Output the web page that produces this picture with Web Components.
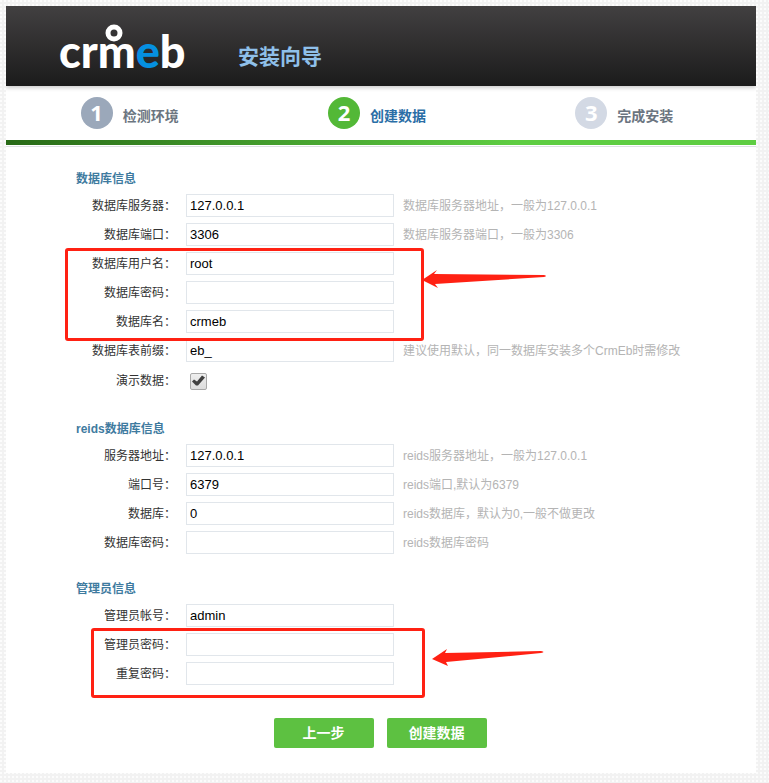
<!DOCTYPE html>
<html lang="zh-CN">
<head>
<meta charset="utf-8">
<title>安装向导</title>
<style>
    body{
        margin: 6px 13px 10px 6px;
        background: #f2f2f2 radial-gradient(circle at 1px 1px, #fcfcfc 1px, transparent 1px) 0 0 / 4px 4px;
        font: 12px/20px "Liberation Sans", "Noto Sans CJK SC", sans-serif;
        color: #333;
    }
</style>
</head>
<body>

<install-page>
    <install-header slot="header" heading="安装向导"></install-header>

    <step-bar slot="steps">
        <step-item number="1" state="done">检测环境</step-item>
        <step-item number="2" state="current">创建数据</step-item>
        <step-item number="3">完成安装</step-item>
    </step-bar>

    <form-section heading="数据库信息">
        <form-row label="数据库服务器：" value="127.0.0.1">数据库服务器地址，一般为127.0.0.1</form-row>
        <form-row label="数据库端口：" value="3306">数据库服务器端口，一般为3306</form-row>
        <marked-rows class="database">
            <form-row label="数据库用户名：" value="root"></form-row>
            <form-row label="数据库密码：" type="password"></form-row>
            <form-row label="数据库名：" value="crmeb"></form-row>
        </marked-rows>
        <form-row label="数据库表前缀：" value="eb_">建议使用默认，同一数据库安装多个CrmEb时需修改</form-row>
        <form-row label="演示数据：" type="checkbox"></form-row>
    </form-section>

    <form-section heading="reids数据库信息">
        <form-row label="服务器地址：" value="127.0.0.1">reids服务器地址，一般为127.0.0.1</form-row>
        <form-row label="端口号：" value="6379">reids端口,默认为6379</form-row>
        <form-row label="数据库：" value="0">reids数据库，默认为0,一般不做更改</form-row>
        <form-row label="数据库密码：" type="password">reids数据库密码</form-row>
    </form-section>

    <form-section heading="管理员信息">
        <form-row label="管理员帐号：" value="admin"></form-row>
        <marked-rows class="admin">
            <form-row label="管理员密码：" type="password"></form-row>
            <form-row label="重复密码：" type="password"></form-row>
        </marked-rows>
    </form-section>

    <form-button slot="actions">上一步</form-button>
    <form-button slot="actions">创建数据</form-button>
</install-page>

<script>
function attach(el, html){
    const root = el.attachShadow({ mode: 'open' });
    root.innerHTML = html;
    return root;
}

class InstallPage extends HTMLElement{
    constructor(){
        super();
        attach(this, `
            <style>
            :host{
                display: block;
                background: #fff;
                box-shadow: 0 0 12px rgba(0, 0, 0, 0.25);
            }

            main{
                padding: 21px 0 0 70px;
            }

            footer{
                display: flex;
                justify-content: center;
                gap: 13px;
                padding: 9px 2px 25px 0;
            }
            </style>

            <slot name="header"></slot>
            <slot name="steps"></slot>
            <main><slot></slot></main>
            <footer><slot name="actions"></slot></footer>
        `);
    }
}

class InstallHeader extends HTMLElement{
    constructor(){
        super();
        const root = attach(this, `
            <style>
            :host{
                position: relative;
                display: flex;
                height: 80px;
                padding-left: 52px;
                background: linear-gradient(#424041, #1b1b1b);
                box-shadow: 0 2px 4px rgba(0, 0, 0, 0.2);
            }

            svg{
                width: 140px;
                height: 80px;
                font: 900 45px Lato, sans-serif;
                fill: #fff;
            }

            .blue{
                fill: #0590e0;
            }

            h1{
                margin: 36px 0 0 40px;
                font-size: 21px;
                font-weight: bold;
                line-height: 30px;
                color: #8fc0ea;
            }
            </style>

            <svg viewBox="0 0 140 80" role="img" aria-label="crmeb">
                <text x="1" y="62">crm<tspan class="blue">e</tspan>b</text>
                <circle cx="56" cy="27" r="6" fill="none" stroke="#fff" stroke-width="5"/>
            </svg>
            <h1></h1>
        `);
        root.querySelector('h1').textContent = this.getAttribute('heading');
    }
}

class StepBar extends HTMLElement{
    constructor(){
        super();
        attach(this, `
            <style>
            :host{
                display: block;
                border-bottom: 1px solid #dde1e4;
            }

            nav{
                display: flex;
                height: 54px;
                padding-right: 8px;
            }

            .line{
                height: 5px;
                margin-bottom: 1px;
                background: linear-gradient(90deg, #286a17, #5ecd42 68%);
            }
            </style>

            <nav><slot></slot></nav>
            <div class="line"></div>
        `);
    }
}

class StepItem extends HTMLElement{
    constructor(){
        super();
        const root = attach(this, `
            <style>
            :host{
                display: flex;
                flex: 1;
                justify-content: center;
                gap: 10px;
                padding-top: 11px;
                font-size: 14px;
                font-weight: bold;
                color: #6b7580;
            }

            b{
                width: 32px;
                height: 32px;
                border-radius: 50%;
                background: #d3d9e4;
                font: bold 22px/30px "Open Sans", sans-serif;
                text-align: center;
                color: #fff;
            }

            :host([state="done"]) b{
                background: #9ba8ba;
            }

            :host([state="current"]) b{
                background: #53b837;
            }

            :host([state="current"]){
                color: #2a6ea6;
            }

            span{
                padding-top: 9px;
            }
            </style>

            <b></b>
            <span><slot></slot></span>
        `);
        root.querySelector('b').textContent = this.getAttribute('number');
    }
}

class FormSection extends HTMLElement{
    constructor(){
        super();
        const root = attach(this, `
            <style>
            :host{
                display: block;
                margin-bottom: 21px;
            }

            h2{
                margin: 0;
                font-size: 12px;
                line-height: 23px;
                color: #3f7b9f;
            }
            </style>

            <h2></h2>
            <slot></slot>
        `);
        root.querySelector('h2').textContent = this.getAttribute('heading');
    }
}

class FormRow extends HTMLElement{
    constructor(){
        super();
        const root = attach(this, `
            <style>
            :host{
                display: flex;
                align-items: center;
                min-height: 29px;
            }

            :host([type="checkbox"]){
                min-height: 32px;
            }

            label{
                width: 100px;
                margin-right: 10px;
                text-align: right;
            }

            input{
                box-sizing: border-box;
                width: 208px;
                height: 23px;
                margin: 0 9px 0 0;
                padding: 0 3px;
                border: 1px solid #e1e6eb;
                background: #fff;
                font: 13px "Liberation Sans", sans-serif;
                color: #000;
            }

            input[type="checkbox"]{
                appearance: none;
                width: 17px;
                height: 17px;
                margin-left: 4px;
                padding: 0;
                border: 1px solid #a8a8a8;
                border-radius: 2px;
                background: linear-gradient(#eee, #ddd);
            }

            input[type="checkbox"]:checked::before{
                display: block;
                content: '';
                width: 15px;
                height: 15px;
                background: #404040;
                clip-path: polygon(1px 8px, 3px 6px, 6px 8px, 11px 2px, 14px 4px, 7px 12px, 5px 12px);
            }

            span{
                color: #b4b4b4;
            }
            </style>

            <label for="field"></label>
            <input id="field">
            <span><slot></slot></span>
        `);
        const input = root.querySelector('input');
        root.querySelector('label').textContent = this.getAttribute('label');
        input.type = this.getAttribute('type') || 'text';
        if(input.type === 'checkbox'){
            input.checked = true;
        } else {
            input.value = this.getAttribute('value') || '';
        }
    }
}

// rows with a red frame and an arrow drawn over them
class MarkedRows extends HTMLElement{
    constructor(){
        super();
        attach(this, `
            <style>
            :host{
                position: relative;
                display: block;
            }

            .frame, svg{
                position: absolute;
                pointer-events: none;
            }

            .frame{
                box-sizing: border-box;
                top: -1px;
                bottom: -5px;
                left: -11px;
                width: 359px;
                border: 3px solid #ff2113;
                border-radius: 3px;
            }

            svg{
                top: 20px;
                left: 346px;
                width: 126px;
                height: 20px;
                fill: #ff2113;
            }

            :host(.admin) .frame{
                top: -2px;
                bottom: -10px;
                left: 15px;
                width: 334px;
            }

            :host(.admin) svg{
                top: 18px;
                left: 356px;
                width: 114px;
            }

            .low{
                display: none;
            }

            :host(.admin) .low{
                display: block;
            }

            :host(.admin) .high{
                display: none;
            }
            </style>

            <slot></slot>
            <div class="frame"></div>
            <svg class="high" viewBox="0 0 126 20" aria-hidden="true">
                <path d="M0 11 L15 1 L12 5 L122 6 Q126 7 122 8 L13 15 L16 19 Z"/>
            </svg>
            <svg class="low" viewBox="0 0 114 20" aria-hidden="true">
                <path d="M0 11 L15 1 L13 5 L109 3 Q114 4 109 5 L14 14 L16 18 Z"/>
            </svg>
        `);
    }
}

class FormButton extends HTMLElement{
    constructor(){
        super();
        attach(this, `
            <style>
            :host{
                display: block;
            }

            button{
                display: block;
                width: 100px;
                height: 30px;
                padding: 0;
                border: 0;
                border-radius: 2px;
                background: #5dc141;
                font: bold 14px/30px "Liberation Sans", "Noto Sans CJK SC", sans-serif;
                color: #fff;
            }
            </style>

            <button type="button"><slot></slot></button>
        `);
    }
}

customElements.define('install-page', InstallPage);
customElements.define('install-header', InstallHeader);
customElements.define('step-bar', StepBar);
customElements.define('step-item', StepItem);
customElements.define('form-section', FormSection);
customElements.define('form-row', FormRow);
customElements.define('marked-rows', MarkedRows);
customElements.define('form-button', FormButton);
</script>
</body>
</html>
